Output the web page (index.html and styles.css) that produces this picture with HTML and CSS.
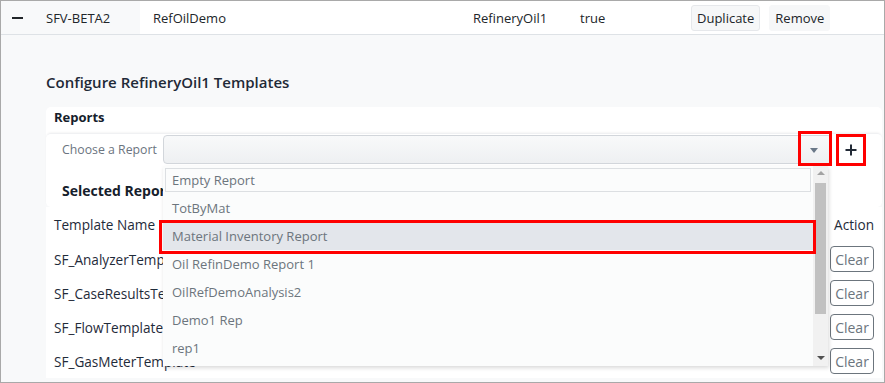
FILE: index.html
```html
<!DOCTYPE html>
<html lang="en">
<head>
    <meta charset="UTF-8">
    <title>Configure Templates</title>
    <link rel="stylesheet" href="styles.css">
</head>
<body>
    <div class="frame">
        <div class="summary-row">
            <div class="cell toggle-cell">
                <span class="minus"></span>
                <span>SFV-BETA2</span>
            </div>
            <div class="cell name-cell">RefOilDemo</div>
            <div class="cell type-cell">RefineryOil1</div>
            <div class="cell flag-cell">true</div>
            <div class="cell actions-cell">
                <button class="btn-light bordered">Duplicate</button>
                <button class="btn-light">Remove</button>
            </div>
        </div>

        <div class="detail">
            <div class="detail-title">Configure RefineryOil1 Templates</div>

            <div class="card">
                <div class="card-header">Reports</div>
                <div class="card-body">
                    <div class="picker-row">
                        <span class="picker-label">Choose a Report</span>
                        <div class="select-wrap">
                            <div class="select-box">
                                <span class="caret"></span>
                            </div>
                            <div class="mark mark-caret"></div>

                            <div class="dropdown">
                                <div class="option focused">Empty Report</div>
                                <div class="option">TotByMat</div>
                                <div class="option active">Material Inventory Report</div>
                                <div class="option">Oil RefinDemo Report 1</div>
                                <div class="option">OilRefDemoAnalysis2</div>
                                <div class="option">Demo1 Rep</div>
                                <div class="option">rep1</div>
                                <div class="scrollbar">
                                    <span class="arrow-up"></span>
                                    <span class="thumb"></span>
                                    <span class="arrow-down"></span>
                                </div>
                                <div class="mark mark-option"></div>
                            </div>
                        </div>
                        <button class="add-btn">
                            <svg width="12" height="12" viewBox="0 0 12 12">
                                <path d="M6 0.5v11M0.5 6h11" stroke="#222a36" stroke-width="2" fill="none"/>
                            </svg>
                        </button>
                    </div>
                    <div class="selected-title">Selected Report</div>
                </div>
            </div>

            <div class="templates">
                <div class="tpl-row head">
                    <div>Template Name</div>
                    <div class="tpl-action">Action</div>
                </div>
                <div class="tpl-row">
                    <div>SF_AnalyzerTemplate</div>
                    <div class="tpl-action"><button class="btn-clear">Clear</button></div>
                </div>
                <div class="tpl-row">
                    <div>SF_CaseResultsTemplate</div>
                    <div class="tpl-action"><button class="btn-clear">Clear</button></div>
                </div>
                <div class="tpl-row">
                    <div>SF_FlowTemplate</div>
                    <div class="tpl-action"><button class="btn-clear">Clear</button></div>
                </div>
                <div class="tpl-row">
                    <div>SF_GasMeterTemplate</div>
                    <div class="tpl-action"><button class="btn-clear">Clear</button></div>
                </div>
            </div>
        </div>
    </div>
</body>
</html>
```

FILE: styles.css
```css
* {
    box-sizing: border-box;
}

body {
    margin: 0;
    font-family: "Open Sans", Arial, sans-serif;
    font-size: 13px;
    color: #212529;
    background: #fff;
}

button {
    font-family: inherit;
    font-size: 13px;
}

.frame {
    width: 885px;
    height: 383px;
    border: 1px solid #a9a9a9;
    overflow: hidden;
    display: flex;
    flex-direction: column;
}

/* summary row */

.summary-row {
    display: flex;
    height: 34px;
    flex-shrink: 0;
    border-bottom: 1px solid #dee2e6;
    background: #fff;
}

.cell {
    display: flex;
    align-items: center;
    padding: 0 13px;
}

.toggle-cell {
    width: 139px;
    background: #f8f9fa;
    padding-left: 11px;
    gap: 23px;
}

.minus {
    width: 11px;
    height: 2px;
    background: #212529;
}

.name-cell {
    width: 320px;
}

.type-cell {
    width: 107px;
}

.flag-cell {
    width: 111px;
}

.actions-cell {
    gap: 9px;
}

.btn-light {
    background: #f6f7f8;
    border: 1px solid #f6f7f8;
    border-radius: 3px;
    color: #212529;
    padding: 3px 5px;
    height: 26px;
}

.btn-light.bordered {
    border-color: #e6e8eb;
}

/* detail area */

.detail {
    flex: 1;
    background: #f8f9fa;
    padding: 37px 2px 0 45px;
}

.detail-title {
    font-size: 15px;
    font-weight: 600;
    line-height: 20px;
    color: #1f2a37;
    margin-bottom: 15px;
}

.card {
    background: #fff;
    border-radius: 5px;
}

.card-header {
    height: 26px;
    padding: 0 8px;
    font-weight: 700;
    line-height: 20px;
    color: #15202b;
}

.card-body {
    height: 74px;
    padding: 1px 16px 0 16px;
    border-top: 1px solid #f0f1f3;
    border-radius: 5px;
    box-shadow: 0 -1px 2px rgba(0, 0, 0, 0.04);
}

.picker-row {
    display: flex;
    align-items: center;
    height: 29px;
}

.picker-label {
    width: 101px;
    font-size: 12.3px;
    color: #6b7480;
}

.select-wrap {
    position: relative;
    width: 669px;
    height: 29px;
}

.select-box {
    height: 29px;
    border: 1px solid #d2d6db;
    border-radius: 4px;
    background: linear-gradient(#f8f9fa, #eef0f2);
    position: relative;
}

.caret {
    position: absolute;
    right: 13px;
    top: 12px;
    border-left: 4px solid transparent;
    border-right: 4px solid transparent;
    border-top: 5px solid #6a7888;
}

.mark {
    position: absolute;
    border: 3px solid #f00;
    pointer-events: none;
}

.mark-caret {
    left: 635px;
    top: -4px;
    width: 34px;
    height: 35px;
}

.add-btn {
    margin-left: 4px;
    width: 30px;
    height: 32px;
    border: 3px solid #f00;
    background: #fff;
    display: flex;
    align-items: center;
    justify-content: center;
    padding: 0;
}

.selected-title {
    margin-top: 17px;
    font-weight: 700;
    font-size: 14px;
    line-height: 20px;
    color: #15202b;
}

/* dropdown list */

.dropdown {
    position: absolute;
    left: 0;
    top: 31px;
    width: 665px;
    height: 200px;
    background: #fbfcfc;
    box-shadow: 1px 2px 4px rgba(0, 0, 0, 0.15);
    z-index: 5;
}

.option {
    width: 650px;
    height: 28px;
    line-height: 28px;
    padding-left: 9px;
    color: #6c757d;
}

.option.focused {
    margin: 2px;
    width: 646px;
    height: 24px;
    line-height: 22px;
    padding-left: 6px;
    border: 1px solid #dcdfe2;
    margin-bottom: 2px;
}

.option.active {
    background: #e3e6eb;
}

.mark-option {
    left: -4px;
    top: 54px;
    width: 657px;
    height: 34px;
}

.scrollbar {
    position: absolute;
    right: 0;
    top: 0;
    width: 15px;
    height: 200px;
    background: #f1f1f1;
    display: flex;
    flex-direction: column;
    align-items: center;
}

.arrow-up {
    margin-top: 5px;
    border-left: 4px solid transparent;
    border-right: 4px solid transparent;
    border-bottom: 4px solid #a3a3a3;
}

.thumb {
    margin-top: 8px;
    width: 11px;
    height: 131px;
    background: #c1c1c1;
}

.arrow-down {
    margin-top: auto;
    margin-bottom: 6px;
    border-left: 4px solid transparent;
    border-right: 4px solid transparent;
    border-top: 4px solid #505050;
}

/* template table */

.templates {
    background: #fff;
}

.tpl-row {
    display: flex;
    align-items: center;
    justify-content: space-between;
    height: 34px;
    padding: 0 8px;
    color: #1f2b3a;
    font-size: 13.6px;
}

.tpl-row.head {
    height: 35px;
}

.tpl-action {
    display: flex;
    justify-content: flex-end;
}

.btn-clear {
    width: 44px;
    height: 26px;
    padding: 0;
    border: 1px solid #6c757d;
    border-radius: 4px;
    background: #fff;
    color: #6c757d;
    font-size: 14px;
}
```
